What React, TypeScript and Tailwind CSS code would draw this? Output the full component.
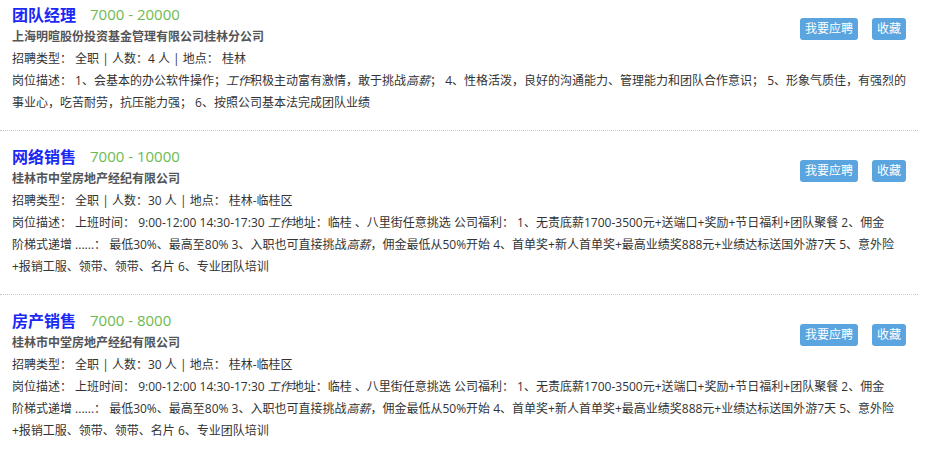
import React from 'react'

interface Job {
  title: string
  salary: string
  company: string
  count: string
  place: string
  desc: React.ReactNode[]
}

const I = ({ children }: { children: React.ReactNode }) => <i className="italic">{children}</i>

const salesDesc = [
  <>岗位描述： 上班时间： 9:00-12:00 14:30-17:30 <I>工作</I>地址：临桂 、八里街任意挑选 公司福利： 1、无责底薪1700-3500元+送端口+奖励+节日福利+团队聚餐 2、佣金</>,
  <>阶梯式递增 ......： 最低30%、最高至80% 3、入职也可直接挑战<I>高薪</I>，佣金最低从50%开始 4、首单奖+新人首单奖+最高业绩奖888元+业绩达标送国外游7天 5、意外险</>,
  <>+报销工服、领带、领带、名片 6、专业团队培训</>,
]

const JOBS: Job[] = [
  {
    title: '团队经理',
    salary: '7000 - 20000',
    company: '上海明暄股份投资基金管理有限公司桂林分公司',
    count: '4',
    place: '桂林',
    desc: [
      <>岗位描述： 1、会基本的办公软件操作；<I>工作</I>积极主动富有激情，敢于挑战<I>高薪</I>； 4、性格活泼，良好的沟通能力、管理能力和团队合作意识； 5、形象气质佳，有强烈的</>,
      <>事业心，吃苦耐劳，抗压能力强； 6、按照公司基本法完成团队业绩</>,
    ],
  },
  {
    title: '网络销售',
    salary: '7000 - 10000',
    company: '桂林市中堂房地产经纪有限公司',
    count: '30',
    place: '桂林-临桂区',
    desc: salesDesc,
  },
  {
    title: '房产销售',
    salary: '7000 - 8000',
    company: '桂林市中堂房地产经纪有限公司',
    count: '30',
    place: '桂林-临桂区',
    desc: salesDesc,
  },
]

function JobItem({ job, first }: { job: Job; first: boolean }) {
  return (
    <div className={`flex pl-3 pr-3 pb-4 border-b border-dotted border-[#c8c8c8] ${first ? 'pt-[3px]' : 'pt-[14px]'}`}>
      <div className="flex-1 min-w-0">
        <div className="flex items-center h-[23px]">
          <span className="text-[16px] font-bold text-[#1a28f5]">{job.title}</span>
          <span className="ml-[14px] text-[15px] text-[#6cbb50]">{job.salary}</span>
        </div>
        <div className="text-[12px] leading-[22px] font-bold text-[#555]">{job.company}</div>
        <div className="text-[12px] leading-[22px] text-[#333] whitespace-nowrap">
          招聘类型： 全职 | 人数：{job.count} 人 | 地点： {job.place}
        </div>
        {job.desc.map((line, i) => (
          <div key={i} className="text-[12px] leading-[22px] text-[#333] whitespace-nowrap">
            {line}
          </div>
        ))}
      </div>
      <div className="flex shrink-0 gap-[14px] mt-[15px] items-start">
        <button type="button" className="h-[22px] px-[5px] rounded-[3px] bg-[#5aa5e0] text-white text-[12px] leading-[22px]">我要应聘</button>
        <button type="button" className="h-[22px] px-[5px] rounded-[3px] bg-[#5aa5e0] text-white text-[12px] leading-[22px]">收藏</button>
      </div>
    </div>
  )
}

export default function App() {
  return (
    <div className="w-[933px] h-[450px] bg-white overflow-hidden font-['Open_Sans','Noto_Sans_CJK_SC',sans-serif]">
      <div className="w-[918px]">
        {JOBS.map((job, i) => (
          <JobItem key={job.title} job={job} first={i === 0} />
        ))}
      </div>
    </div>
  )
}
